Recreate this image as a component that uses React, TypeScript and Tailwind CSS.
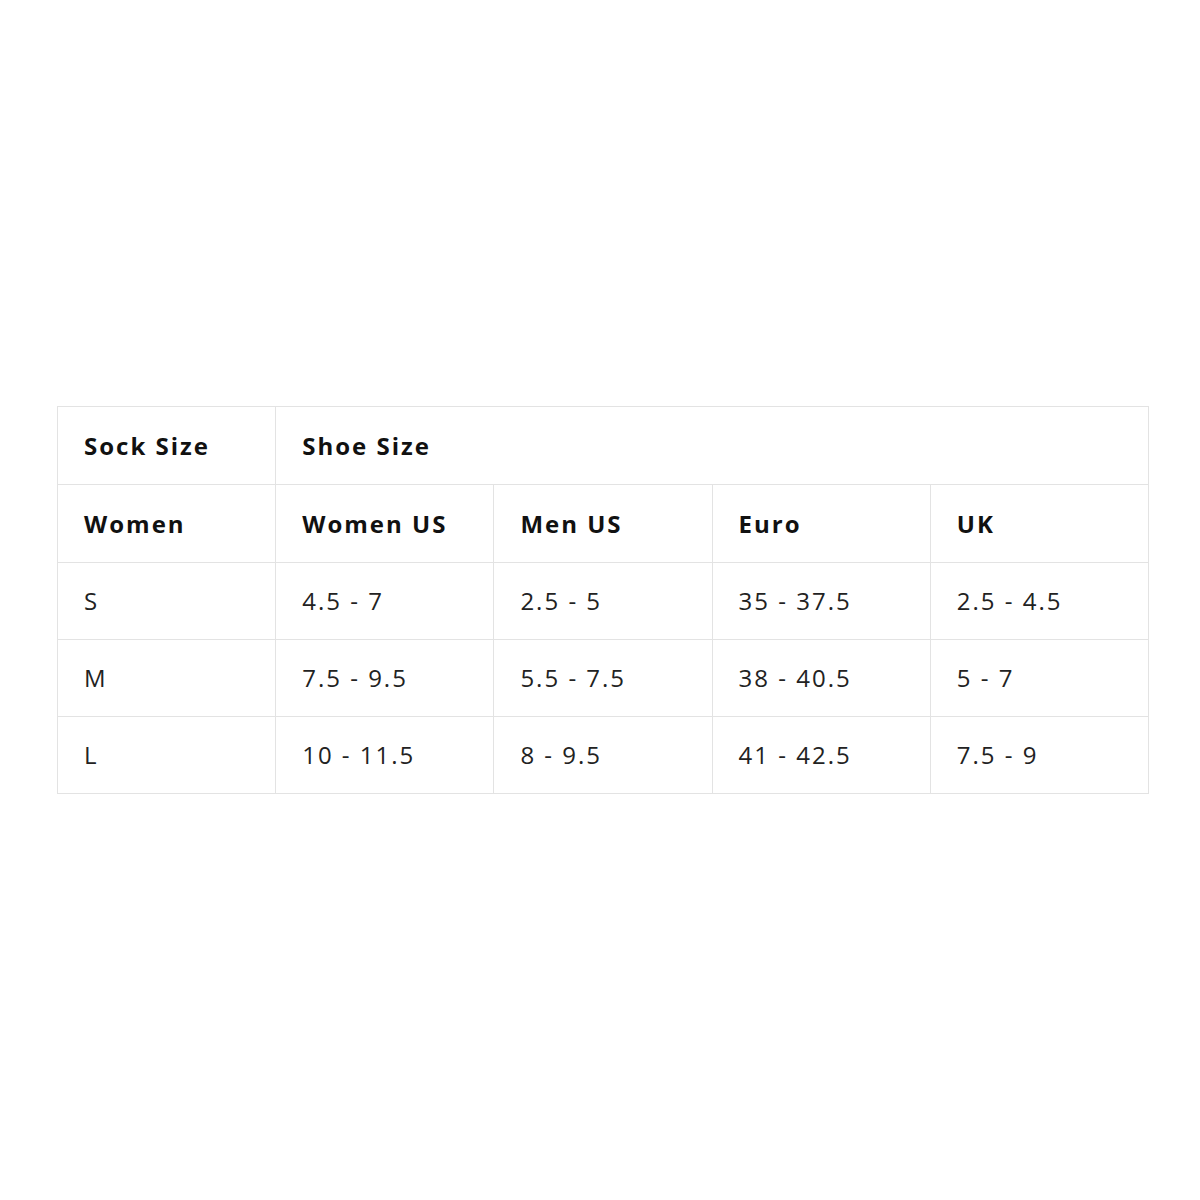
const rows = [
  ["S", "4.5 - 7", "2.5 - 5", "35 - 37.5", "2.5 - 4.5"],
  ["M", "7.5 - 9.5", "5.5 - 7.5", "38 - 40.5", "5 - 7"],
  ["L", "10 - 11.5", "8 - 9.5", "41 - 42.5", "7.5 - 9"],
];

const subHead = ["Women", "Women US", "Men US", "Euro", "UK"];

export default function App() {
  return (
    <div className="flex h-[1200px] w-[1200px] items-center bg-white font-['Open_Sans',sans-serif] text-[#111]">
      <div className="ml-[57px] grid w-[1092px] grid-cols-5 border-l border-t border-[#e3e3e3]">
        <div className="flex h-[78px] items-center border-b border-r border-[#e3e3e3] pl-[26px] text-[24px] font-bold tracking-[2px]">
          Sock Size
        </div>
        <div className="col-span-4 flex h-[78px] items-center border-b border-r border-[#e3e3e3] pl-[26px] text-[24px] font-bold tracking-[2px]">
          Shoe Size
        </div>
        {subHead.map((h) => (
          <div
            key={h}
            className="flex h-[78px] items-center border-b border-r border-[#e3e3e3] pl-[26px] text-[24px] font-bold tracking-[2px]"
          >
            {h}
          </div>
        ))}
        {rows.map((r) =>
          r.map((c, i) => (
            <div
              key={r[0] + i}
              className="flex h-[77px] items-center border-b border-r border-[#e3e3e3] pl-[26px] text-[24px] tracking-[2px] text-[#222]"
            >
              {c}
            </div>
          ))
        )}
      </div>
    </div>
  );
}
